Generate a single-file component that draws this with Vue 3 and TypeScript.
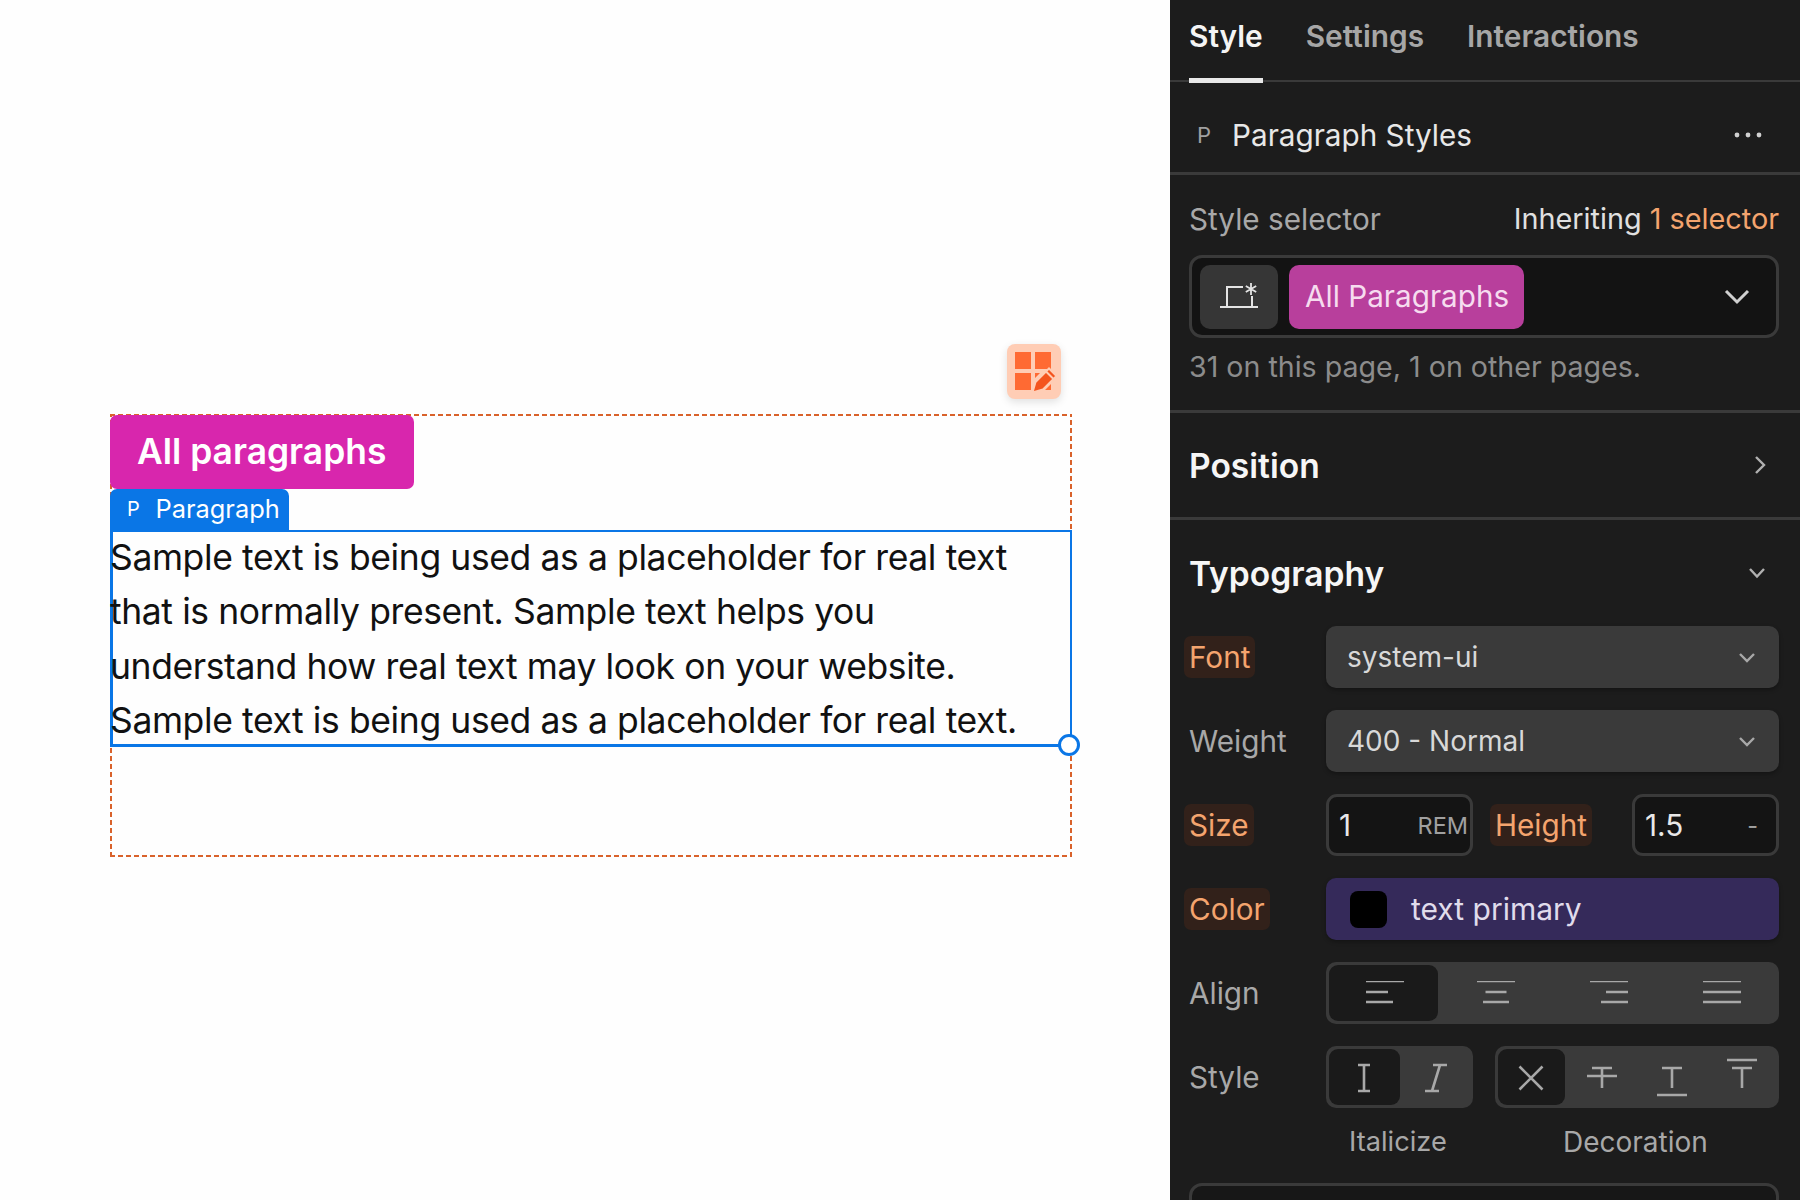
<script setup lang="ts">
const tabs = ['Style', 'Settings', 'Interactions']
const lines = [
  'Sample text is being used as a placeholder for real text',
  'that is normally present. Sample text helps you',
  'understand how real text may look on your website.',
  'Sample text is being used as a placeholder for real text.',
]
const aligns = [
  { d: 'M0 2H38M0 13H22M0 23H27', active: true },
  { d: 'M0 2H38M8.5 13H29.5M6 23H32', active: false },
  { d: 'M0 2H38M16 13H38M11 23H38', active: false },
  { d: 'M0 2H38M0 13H38M0 23H38', active: false },
]
const italics = [
  { d: 'M9 8H21M15 8V34M9 34H21', active: true },
  { d: 'M13 8H27M5 34H19M20 8L12 34', active: false },
]
const decorations = [
  { d: 'M3.5 9.5L26.5 32.5M26.5 9.5L3.5 32.5', active: true },
  { d: 'M5 11H25M0 19H30M15 11V31', active: false },
  { d: 'M5 11H25M15 11V31M0 38H30', active: false },
  { d: 'M0 3H30M5 11H25M15 11V31', active: false },
]
</script>

<template>
  <div class="app">
    <main class="canvas">
      <div class="frame">
        <div class="tile">
          <svg width="54" height="55" viewBox="0 0 54 55">
            <path class="tile-sq" d="M8 8H24V25H8ZM28 8H44V25H28ZM8 29H24V46H8ZM28 29H33L28 34ZM38 46L44 40V46Z" />
            <path class="tile-pen" d="M25.500 48.500L28.500 38L42 24.500L49.500 32L36 45.500Z" />
            <path class="tile-cut" d="M39 27.500L46.500 35" />
          </svg>
        </div>
        <div class="tag">All paragraphs</div>
        <div class="bluetab"><span class="bluetab-p">P</span><span>Paragraph</span></div>
        <div class="para">
          <span v-for="l in lines" :key="l" class="para-line">{{ l }}</span>
        </div>
        <div class="handle"></div>
      </div>
    </main>

    <aside class="panel">
      <nav class="tabs">
        <span v-for="(t, i) in tabs" :key="t" class="tab" :class="{ on: i === 0 }">{{ t }}</span>
      </nav>

      <header class="head">
        <span class="head-p">P</span>
        <span class="head-title">Paragraph Styles</span>
        <svg class="head-dots" width="28" height="6" viewBox="0 0 28 6"><circle cx="3" cy="3" r="2.4" /><circle cx="14" cy="3" r="2.4" /><circle cx="25" cy="3" r="2.4" /></svg>
      </header>

      <section class="selector">
        <div class="sel-top">
          <span class="muted">Style selector</span>
          <span class="inherit">Inheriting <em>1 selector</em></span>
        </div>
        <div class="sel-box">
          <span class="sel-btn">
            <svg width="40" height="30" viewBox="0 0 40 30" fill="none" stroke="#e4e4e4" stroke-width="2">
              <path d="M1 25H39M8 25V5H24M33 25V14" />
              <path d="M32 1V13M26.8 4L37.2 10M37.2 4L26.8 10" stroke-width="1.8" />
            </svg>
          </span>
          <span class="sel-pill">All Paragraphs</span>
          <svg class="sel-chev" width="26" height="16" viewBox="0 0 26 16" fill="none" stroke="#d0d0d0" stroke-width="3"><path d="M2 2L13 13L24 2" /></svg>
        </div>
        <p class="sel-note">31 on this page, 1 on other pages.</p>
      </section>

      <section class="position">
        <h2 class="sec-title">Position</h2>
        <svg width="12" height="20" viewBox="0 0 12 20" fill="none" stroke="#b0b0b0" stroke-width="2.4"><path d="M2 2L10 10L2 18" /></svg>
      </section>

      <section class="typo">
        <div class="typo-head">
          <h2 class="sec-title">Typography</h2>
          <svg width="18" height="12" viewBox="0 0 18 12" fill="none" stroke="#b0b0b0" stroke-width="2.4"><path d="M2 2L9 9.500L16 2" /></svg>
        </div>

        <div class="row">
          <span class="label"><span class="hot">Font</span></span>
          <div class="select">
            <span>system-ui</span>
            <svg width="18" height="11" viewBox="0 0 18 11" fill="none" stroke="#a8a8a8" stroke-width="2.4"><path d="M2 2L9 9L16 2" /></svg>
          </div>
        </div>
        <div class="row">
          <span class="label">Weight</span>
          <div class="select">
            <span>400 - Normal</span>
            <svg width="18" height="11" viewBox="0 0 18 11" fill="none" stroke="#a8a8a8" stroke-width="2.4"><path d="M2 2L9 9L16 2" /></svg>
          </div>
        </div>
        <div class="row">
          <span class="label"><span class="hot">Size</span></span>
          <div class="input"><span>1</span><span class="unit">REM</span></div>
          <span class="label label-h"><span class="hot">Height</span></span>
          <div class="input input-h"><span>1.5</span><span class="unit dash">-</span></div>
        </div>
        <div class="row">
          <span class="label"><span class="hot">Color</span></span>
          <div class="color"><span class="swatch"></span><span>text primary</span></div>
        </div>
        <div class="row">
          <span class="label">Align</span>
          <div class="toggle grow">
            <span v-for="a in aligns" :key="a.d" class="cell" :class="{ on: a.active }">
              <svg width="38" height="25" viewBox="0 2 38 25" fill="none" stroke="#a8a8a8" stroke-width="2.600"><path :d="a.d" /></svg>
            </span>
          </div>
        </div>
        <div class="row">
          <span class="label">Style</span>
          <div class="toggle italic">
            <span v-for="a in italics" :key="a.d" class="cell" :class="{ on: a.active }">
              <svg width="30" height="42" viewBox="0 -1 30 42" fill="none" stroke="#a8a8a8" stroke-width="2.600"><path :d="a.d" /></svg>
            </span>
          </div>
          <div class="toggle deco">
            <span v-for="a in decorations" :key="a.d" class="cell" :class="{ on: a.active }">
              <svg width="30" height="42" viewBox="0 -1 30 42" fill="none" stroke="#a8a8a8" stroke-width="2.600"><path :d="a.d" /></svg>
            </span>
          </div>
        </div>
        <div class="captions">
          <span class="cap-i">Italicize</span>
          <span class="cap-d">Decoration</span>
        </div>
        <div class="more"></div>
      </section>
    </aside>
  </div>
</template>

<style>
html, body { margin: 0; background: #fff; }
</style>

<style scoped>
.app { display: flex; width: 1800px; height: 1200px; overflow: hidden; font-family: Inter, "Liberation Sans", sans-serif; }
.canvas { width: 1170px; flex: none; background: #fefefe; padding: 414px 0 0 110px; box-sizing: border-box; }
.frame {
  position: relative; width: 962px; height: 443px; box-sizing: border-box; padding-top: 1px;
  background:
    repeating-linear-gradient(90deg, #d9622b 0 5px, transparent 5px 8px) left top / 100% 2px no-repeat,
    repeating-linear-gradient(90deg, #d9622b 0 5px, transparent 5px 8px) left bottom / 100% 2px no-repeat,
    repeating-linear-gradient(0deg, #d9622b 0 5px, transparent 5px 8px) left top / 2px 100% no-repeat,
    repeating-linear-gradient(0deg, #d9622b 0 5px, transparent 5px 8px) right top / 2px 100% no-repeat;
}
.tile { position: absolute; left: 897px; top: -70px; width: 54px; height: 55px; border-radius: 8px; background: #ffcdb5; box-shadow: 0 3px 8px rgba(0,0,0,.12); }
.tile svg { display: block; }
.tile-sq { fill: #ff6a33; }
.tile-pen { fill: #f4541e; stroke: #ffcdb5; stroke-width: 2; }
.tile-cut { stroke: #ffcdb5; stroke-width: 2; fill: none; }
.tag { width: 304px; height: 74px; box-sizing: border-box; background: #d826ad; color: #fff; border-radius: 7px; font-size: 35.400px; font-weight: 600; line-height: 74px; padding-left: 27px; }
.bluetab { width: 179px; height: 41px; box-sizing: border-box; background: #0a76e6; color: #fff; border-radius: 7px 7px 0 0; font-size: 25.400px; line-height: 40px; display: flex; padding-left: 17px; }
.bluetab-p { font-size: 20px; width: 28.500px; }
.para { height: 217px; box-sizing: border-box; border: 3px solid #0a76e6; border-width: 2px 2px 3px 3px; color: #111; font-size: 35.500px; letter-spacing: -.4px; line-height: 54.400px; }
.para-line { display: block; white-space: nowrap; margin-left: -3px; }
.para-line:first-child { margin-top: -1px; }
.handle { position: absolute; left: 948px; top: 320px; width: 22px; height: 22px; box-sizing: border-box; border-radius: 50%; background: #fff; border: 3px solid #0a76e6; }

.panel { width: 630px; flex: none; background: #1c1c1c; color: #e8e8e8; overflow: hidden; font-size: 29.700px; }
.tabs { height: 82px; box-sizing: border-box; border-bottom: 2px solid #3a3a3a; padding-left: 19px; display: flex; gap: 43px; }
.tab { position: relative; height: 80px; line-height: 73px; font-size: 29.850px; font-weight: 600; color: #a6a6a6; }
.tab.on { color: #f4f4f4; }
.tab.on::after { content: ""; position: absolute; left: 0; right: 0; bottom: -3px; height: 5px; background: #e8e8e8; }

.head { height: 93px; box-sizing: border-box; border-bottom: 3px solid #3a3a3a; display: flex; align-items: center; padding: 16px 38px 0 27px; }
.head-p { width: 35px; font-size: 22px; color: #a0a0a0; }
.head-title { flex: 1; color: #e8e8e8; }
.head-dots { fill: #d0d0d0; }

.selector { height: 238px; box-sizing: border-box; border-bottom: 3px solid #3a3a3a; padding: 0 21px 0 19px; }
.sel-top { height: 80px; box-sizing: border-box; padding-top: 26px; line-height: 36px; display: flex; justify-content: space-between; }
.muted { color: #a8a8a8; }
.inherit { color: #e0e0e0; font-size: 28.800px; }
.inherit em { font-style: normal; color: #f4a46e; }
.sel-box { height: 83px; box-sizing: border-box; background: #131313; border: 3px solid #3a3a3a; border-radius: 13px; display: flex; align-items: center; padding: 0 26px 0 8px; gap: 11px; }
.sel-btn { width: 78px; height: 64px; border-radius: 10px; background: #363636; display: flex; align-items: center; justify-content: center; }
.sel-pill { height: 64px; width: 235px; box-sizing: border-box; border-radius: 10px; background: #b83f9c; color: #f6dcef; line-height: 62px; padding-left: 16px; white-space: nowrap; }
.sel-chev { margin-left: auto; }
.sel-note { margin: 11px 0 0; color: #8c8c8c; line-height: 36px; font-size: 28.600px; }

.position { height: 107px; box-sizing: border-box; border-bottom: 3px solid #3a3a3a; display: flex; align-items: center; justify-content: space-between; padding: 0 34px 0 19px; }
.sec-title { margin: 0; font-size: 33.600px; font-weight: 600; color: #f6f6f6; }

.typo { padding: 0 21px 0 19px; }
.typo-head { height: 106px; box-sizing: border-box; padding-right: 13px; display: flex; align-items: center; justify-content: space-between; }
.row { height: 62px; margin-bottom: 22px; display: flex; align-items: center; }
.label { width: 137px; flex: none; color: #a8a8a8; box-sizing: border-box; }
.hot { display: inline-block; color: #f4a46e; background: #32211a; border-radius: 7px; padding: 3px 5px; margin-left: -5px; }
.label-h { margin-left: 22px; }
.select, .color { flex: 1; height: 62px; box-sizing: border-box; border-radius: 10px; display: flex; align-items: center; }
.select { background: #3a3a3a; color: #d8d8d8; font-size: 28px; padding: 0 23px 0 21px; justify-content: space-between; box-shadow: 0 2px 4px rgba(0,0,0,.3); }
.input { width: 147px; flex: none; height: 62px; box-sizing: border-box; border: 3px solid #3a3a3a; border-radius: 11px; background: #141414; color: #e8e8e8; display: flex; align-items: center; justify-content: space-between; padding: 0 2px 0 10px; }
.unit { font-size: 23.500px; color: #a0a0a0; }
.dash { padding-right: 16px; }
.color { background: #352a5a; color: #e0dcec; font-size: 30px; padding-left: 24px; gap: 24px; box-shadow: 0 2px 4px rgba(0,0,0,.3); }
.swatch { width: 37px; height: 37px; border-radius: 8px; background: #000; }
.toggle { height: 62px; box-sizing: border-box; border-radius: 10px; background: #3a3a3a; padding: 3px; display: flex; }
.grow { flex: 1; }
.grow .cell.on { flex: none; width: 109px; }
.grow .cell.on svg { margin-left: 2px; }
.grow .cell:not(.on) svg { margin-left: 4px; }
.italic { width: 147px; flex: none; }
.deco { width: 284px; flex: none; margin-left: 22px; }
.deco .cell.on { flex: none; width: 67px; }
.deco .cell.on svg { margin-right: 2px; }
.deco .cell:not(.on) svg { margin-left: 3px; }
.cell { flex: 1; border-radius: 9px; display: flex; align-items: center; justify-content: center; }
.cell.on { background: #1a1a1a; }
.cell svg { display: block; }
.captions { height: 36px; margin-top: -6px; position: relative; display: flex; line-height: 36px; font-size: 28px; color: #a8a8a8; }
.cap-i { margin-left: 160px; width: 214px; font-size: 27.200px; }
.more { margin-top: 23px; height: 60px; box-sizing: border-box; border: 3px solid #3a3a3a; border-radius: 13px; background: #171717; }
</style>
